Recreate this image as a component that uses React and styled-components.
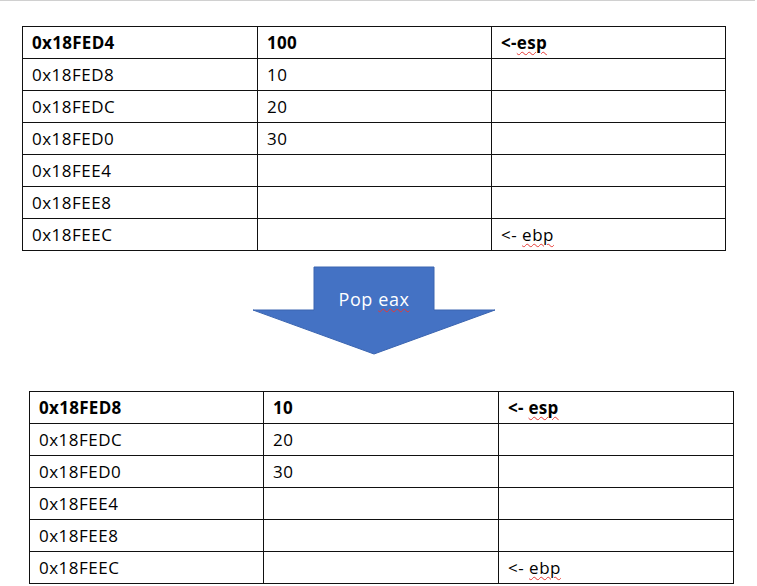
import React from 'react';
import styled, { createGlobalStyle } from 'styled-components';

const before = [
  ['0x18FED4', '100', '<-esp'],
  ['0x18FED8', '10', ''],
  ['0x18FEDC', '20', ''],
  ['0x18FED0', '30', ''],
  ['0x18FEE4', '', ''],
  ['0x18FEE8', '', ''],
  ['0x18FEEC', '', '<- ebp'],
];

const after = [
  ['0x18FED8', '10', '<- esp'],
  ['0x18FEDC', '20', ''],
  ['0x18FED0', '30', ''],
  ['0x18FEE4', '', ''],
  ['0x18FEE8', '', ''],
  ['0x18FEEC', '', '<- ebp'],
];

const GlobalStyle = createGlobalStyle`
  body {
    margin: 0;
    background: #fff;
    font-family: "Open Sans", "Noto Sans CJK KR", sans-serif;
    color: #000;
  }
`;

const Page = styled.div`
  width: 755px;
  border-top: 1px solid #d0d0d0;
  padding-top: 25px;
`;

const Table = styled.table`
  border-collapse: collapse;
  table-layout: fixed;
  margin-left: ${({ $left }) => $left}px;
  width: ${({ $width }) => $width}px;
`;

const Cell = styled.td`
  border: 1px solid #111;
  height: 31px;
  padding: 0 0 0 9px;
  font-size: 17px;
  line-height: 20px;
  font-weight: ${({ $bold }) => ($bold ? 700 : 400)};
  letter-spacing: ${({ $bold }) => ($bold ? 0.3 : 0.5)}px;
  white-space: pre;
  vertical-align: middle;
`;

const Marked = styled.span`
  text-decoration: underline wavy #e53935;
  text-decoration-thickness: 1px;
  text-underline-offset: 2px;
`;

const ArrowBox = styled.div`
  position: relative;
  width: 244px;
  height: 89px;
  margin: 15px 0 36px 252px;
`;

const ArrowLabel = styled.span`
  position: absolute;
  top: 21px;
  left: 0;
  right: 0;
  text-align: center;
  color: #fff;
  font-size: 18px;
  letter-spacing: 0.6px;
`;

function renderText(text) {
  const m = text.match(/^(<-\s?)(\w+)$/);
  if (!m) return text;
  return (
    <>
      {m[1]}
      <Marked>{m[2]}</Marked>
    </>
  );
}

function StackTable({ rows, left, widths }) {
  const total = widths.reduce((a, b) => a + b, 0);
  return (
    <Table $left={left} $width={total}>
      <colgroup>
        {widths.map((w, i) => (
          <col key={i} style={{ width: w }} />
        ))}
      </colgroup>
      <tbody>
        {rows.map((row, r) => (
          <tr key={r}>
            {row.map((text, c) => (
              <Cell key={c} $bold={r === 0}>
                {renderText(text)}
              </Cell>
            ))}
          </tr>
        ))}
      </tbody>
    </Table>
  );
}

function DownArrow() {
  return (
    <ArrowBox>
      <svg width="244" height="89" viewBox="0 0 244 89">
        <path
          d="M62 1 H182 V44 H243 L122 88 L1 44 H62 Z"
          fill="#4472c4"
          stroke="#3a64b0"
          strokeWidth="1"
        />
      </svg>
      <ArrowLabel>
        Pop <Marked>eax</Marked>
      </ArrowLabel>
    </ArrowBox>
  );
}

export default function App() {
  return (
    <>
      <GlobalStyle />
      <Page>
        <StackTable rows={before} left={22} widths={[235, 234, 234]} />
        <DownArrow />
        <StackTable rows={after} left={29} widths={[234, 235, 235]} />
      </Page>
    </>
  );
}
